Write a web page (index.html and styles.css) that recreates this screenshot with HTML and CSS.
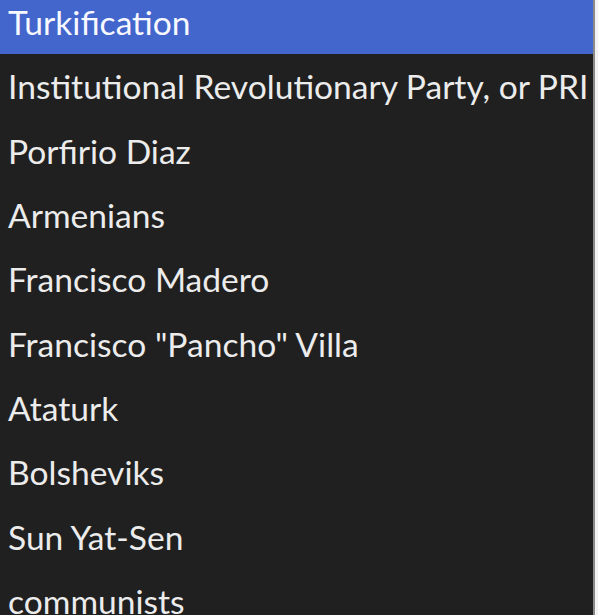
FILE: index.html
```html
<!DOCTYPE html>
<html lang="en">
<head>
  <meta charset="UTF-8">
  <title>Term List</title>
  <link rel="stylesheet" href="styles.css">
</head>
<body>
  <div class="frame">
    <ul class="options">
      <li class="option selected">Turkification</li>
      <li class="option">Institutional Revolutionary Party, or PRI</li>
      <li class="option">Porfirio Diaz</li>
      <li class="option">Armenians</li>
      <li class="option">Francisco Madero</li>
      <li class="option">Francisco "Pancho" Villa</li>
      <li class="option">Ataturk</li>
      <li class="option">Bolsheviks</li>
      <li class="option">Sun Yat-Sen</li>
      <li class="option">communists</li>
    </ul>
  </div>
</body>
</html>
```

FILE: styles.css
```css
/* Page */
body, html {
  margin: 0;
  height: 100%;
  overflow: hidden;
  background-color: #f2f2f2;
  font-family: Lato, "Open Sans", sans-serif;
}

/* Dropdown list box */
.frame {
  width: 593px;
  height: 615px;
  overflow: hidden;
  background-color: #202020;
  border-right: 2px solid #8a8a8a;
}

.options {
  list-style: none;
  margin: -10px 0 0;
  padding: 0;
}

.option {
  height: 64.3px;
  display: flex;
  align-items: center;
  padding-left: 8px;
  color: #ececec;
  font-size: 33.6px;
  white-space: nowrap;
}

.selected {
  background-color: #4266cc;
  color: #f8f8ff;
}
```
